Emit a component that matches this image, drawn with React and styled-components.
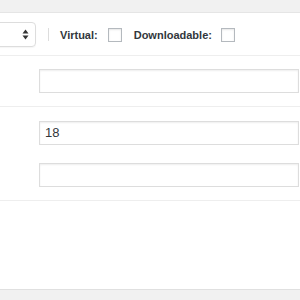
import React from "react"
import styled, { createGlobalStyle } from "styled-components"

const GlobalStyle = createGlobalStyle`
    html, body {
        margin: 0;
        padding: 0;
        background: #f1f1f1;
        font-family: "Liberation Sans", Arial, sans-serif;
        color: #32373c;
    }
`

const Page = styled.div`
    padding: 12px 0 10px;
    height: 300px;
    box-sizing: border-box;
`

const Panel = styled.div`
    background: #fff;
    border-top: 1px solid #e5e5e5;
    border-bottom: 1px solid #e0e0e0;
    height: 278px;
    box-sizing: border-box;
    overflow: hidden;
`

const Toolbar = styled.div`
    display: flex;
    align-items: center;
    height: 43px;
    box-sizing: border-box;
    border-bottom: 1px solid #eee;
    padding-top: 1px;
`

const Select = styled.div`
    position: relative;
    margin-left: -8px;
    width: 44px;
    height: 25px;
    box-sizing: border-box;
    border: 1px solid #ddd;
    border-radius: 4px;
    box-shadow: 0 1px 1px rgba(0, 0, 0, .04);
    display: flex;
    align-items: center;
    justify-content: flex-end;
    padding-right: 6px;
`

const Divider = styled.span`
    width: 1px;
    height: 13px;
    background: #ddd;
    margin: 0 11px 0 12px;
`

const Label = styled.span`
    font-size: 11px;
    font-weight: bold;
    color: #32373c;
    margin-right: ${({ gap }) => gap}px;
`

const Check = styled.span`
    width: 14px;
    height: 14px;
    box-sizing: border-box;
    border: 1px solid #b4b9be;
    background: #fff;
    box-shadow: inset 0 1px 2px rgba(0, 0, 0, .1);
    margin-right: 12px;
`

const Section = styled.div`
    display: flex;
    flex-direction: column;
    gap: 18px;
    padding: ${({ pad }) => pad};
    border-bottom: 1px solid #eee;
`

const Field = styled.div`
    margin-left: 39px;
    width: 260px;
    height: 24px;
    box-sizing: border-box;
    border: 1px solid #ddd;
    box-shadow: inset 0 1px 2px rgba(0, 0, 0, .07);
    font-size: 13px;
    line-height: 22px;
    padding-left: 5px;
    color: #32373c;
`

const Arrows = () => (
    <svg width="7" height="11" viewBox="0 0 7 11">
        <path d="M3.5 0.5 L6.5 4.5 L0.5 4.5 Z M3.5 10.5 L6.5 6.5 L0.5 6.5 Z" fill="#333" />
    </svg>
)

const App = () => {
    return (
        <Page>
            <GlobalStyle />
            <Panel>
                <Toolbar>
                    <Select>
                        <Arrows />
                    </Select>
                    <Divider />
                    <Label gap={10}>Virtual:</Label>
                    <Check />
                    <Label gap={9}>Downloadable:</Label>
                    <Check />
                </Toolbar>
                <Section pad="13px 0 13px">
                    <Field />
                </Section>
                <Section pad="14px 0 13px">
                    <Field>18</Field>
                    <Field />
                </Section>
            </Panel>
        </Page>
    )
}

export default App
